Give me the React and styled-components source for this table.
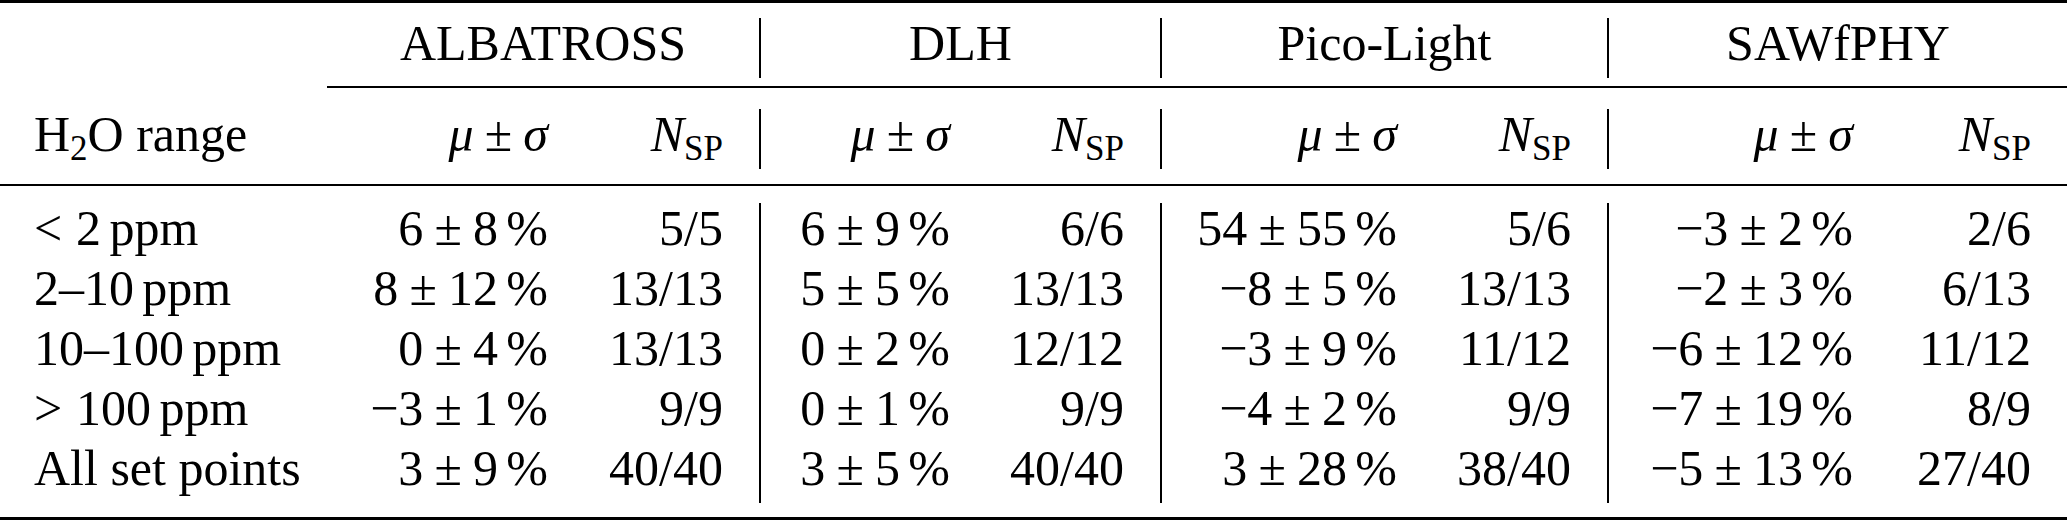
import React from 'react';
import styled, { createGlobalStyle } from 'styled-components';

// column edges follow the reference: label | ALB μ N | DLH μ N | Pico μ N | SAW μ N
const COLUMNS = '327px 257px 175px 227px 174px 273px 174px 282px 178px';

const GlobalStyle = createGlobalStyle`
    html, body {
        margin: 0;
        padding: 0;
        background: #fff;
        font-family: "Liberation Serif", "Times New Roman", serif;
    }
`;

const Table = styled.div`
    width: 2067px;
    font-family: "Liberation Serif", "Times New Roman", serif;
    font-size: 50px;
    color: #000;
    background: #fff;
`;

const Rule = styled.div`
    height: ${(p) => p.$h}px;
    margin-left: ${(p) => p.$inset || 0}px;
    background: #000;
`;

const Band = styled.div`
    padding-top: ${(p) => p.$top}px;
    padding-bottom: ${(p) => p.$bottom}px;
`;

const Row = styled.div`
    display: grid;
    grid-template-columns: ${COLUMNS};
`;

const Cell = styled.div`
    line-height: 50px;
    height: 50px;
    padding-bottom: 10px;
    white-space: nowrap;
    text-align: ${(p) => (p.$label ? 'left' : 'right')};
    padding-left: ${(p) => (p.$label ? '34px' : '0')};
    padding-right: ${(p) => (p.$label ? '0' : '36px')};
    border-left: ${(p) => (p.$bar ? '2px solid #000' : 'none')};
`;

const GroupHead = styled.div`
    grid-column: span 2;
    line-height: 50px;
    height: 50px;
    padding-bottom: 10px;
    text-align: center;
    white-space: nowrap;
    border-left: ${(p) => (p.$bar ? '2px solid #000' : 'none')};
`;

const Sub = styled.span`
    font-size: 0.7em;
    font-style: normal;
    line-height: 0;
    vertical-align: -0.27em;
`;

const Var = styled.i`
    font-style: italic;
`;

const Op = styled.span`
    margin: 0 0.222em;
`;

const Rel = styled.span`
    margin-right: 0.278em;
`;

const Thin = styled.span`
    margin-left: 0.167em;
`;

const groups = [
    {
        name: 'ALBATROSS',
        rows: [
            [6, 8, '5/5'],
            [8, 12, '13/13'],
            [0, 4, '13/13'],
            [-3, 1, '9/9'],
            [3, 9, '40/40'],
        ],
    },
    {
        name: 'DLH',
        rows: [
            [6, 9, '6/6'],
            [5, 5, '13/13'],
            [0, 2, '12/12'],
            [0, 1, '9/9'],
            [3, 5, '40/40'],
        ],
    },
    {
        name: 'Pico-Light',
        rows: [
            [54, 55, '5/6'],
            [-8, 5, '13/13'],
            [-3, 9, '11/12'],
            [-4, 2, '9/9'],
            [3, 28, '38/40'],
        ],
    },
    {
        name: 'SAWfPHY',
        rows: [
            [-3, 2, '2/6'],
            [-2, 3, '6/13'],
            [-6, 12, '11/12'],
            [-7, 19, '8/9'],
            [-5, 13, '27/40'],
        ],
    },
];

const labels = [
    <>
        <Rel>&lt;</Rel>2<Thin>ppm</Thin>
    </>,
    <>
        2–10<Thin>ppm</Thin>
    </>,
    <>
        10–100<Thin>ppm</Thin>
    </>,
    <>
        <Rel>&gt;</Rel>100<Thin>ppm</Thin>
    </>,
    <>All set points</>,
];

const num = (n) => (n < 0 ? `−${-n}` : `${n}`);

function Spread({ mean, sd }) {
    return (
        <>
            {num(mean)}
            <Op>±</Op>
            {sd}
            <Thin>%</Thin>
        </>
    );
}

export default function App() {
    return (
        <>
            <GlobalStyle />
            <Table>
                <Rule $h={3} />
                <Band $top={15} $bottom={8}>
                    <Row>
                        <Cell $label />
                        {groups.map((g, i) => (
                            <GroupHead key={g.name} $bar={i > 0}>
                                {g.name}
                            </GroupHead>
                        ))}
                    </Row>
                </Band>
                <Rule $h={2} $inset={327} />
                <Band $top={21} $bottom={15}>
                    <Row>
                        <Cell $label>
                            H<Sub>2</Sub>O range
                        </Cell>
                        {groups.map((g, i) => (
                            <React.Fragment key={g.name}>
                                <Cell $bar={i > 0}>
                                    <Var>μ</Var>
                                    <Op>±</Op>
                                    <Var>σ</Var>
                                </Cell>
                                <Cell>
                                    <Var>N</Var>
                                    <Sub>SP</Sub>
                                </Cell>
                            </React.Fragment>
                        ))}
                    </Row>
                </Band>
                <Rule $h={2} />
                <Band $top={17} $bottom={14}>
                    {labels.map((label, r) => (
                        <Row key={r}>
                            <Cell $label>{label}</Cell>
                            {groups.map((g, i) => (
                                <React.Fragment key={g.name}>
                                    <Cell $bar={i > 0}>
                                        <Spread mean={g.rows[r][0]} sd={g.rows[r][1]} />
                                    </Cell>
                                    <Cell>{g.rows[r][2]}</Cell>
                                </React.Fragment>
                            ))}
                        </Row>
                    ))}
                </Band>
                <Rule $h={3} />
            </Table>
        </>
    );
}
